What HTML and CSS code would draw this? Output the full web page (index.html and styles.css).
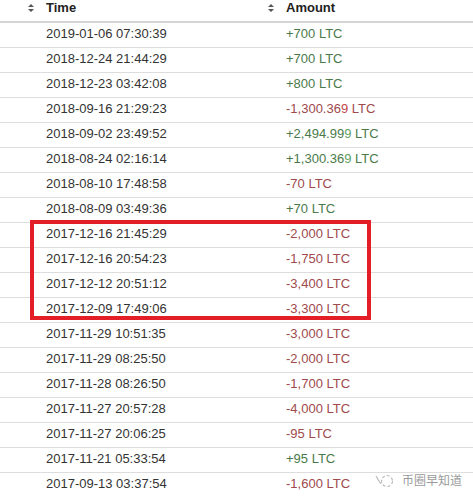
FILE: index.html
```html
<!DOCTYPE html>
<html lang="en">
  <head>
    <meta charset="UTF-8" />
    <title>LTC transactions</title>
    <link rel="stylesheet" href="styles.css">
  </head>
  <body>
    <div class="tableBlock">
      <div class="row head">
        <div class="cell">
          <svg class="sortIcon" width="6" height="8" viewBox="0 0 6 8"><path d="M3 0 L6 3 L0 3 Z M0 5 L6 5 L3 8 Z" fill="#555"/></svg>
          <span>Time</span>
        </div>
        <div class="cell">
          <svg class="sortIcon" width="6" height="8" viewBox="0 0 6 8"><path d="M3 0 L6 3 L0 3 Z M0 5 L6 5 L3 8 Z" fill="#555"/></svg>
          <span>Amount</span>
        </div>
      </div>
      <div id="rows"></div>

      <div class="highlight"></div>
      <div class="watermark">
        <svg width="22" height="18" viewBox="0 0 22 18">
          <path d="M2 5 Q4 9 7 13" stroke="#bbb" stroke-width="1.2" fill="none"/>
          <circle cx="13" cy="10" r="5.5" stroke="#bbb" stroke-width="1.2" fill="none" stroke-dasharray="3 2"/>
        </svg>
        <span>币圈早知道</span>
      </div>
    </div>

    <script>
      const data = [
        ["2019-01-06 07:30:39", "+700 LTC"],
        ["2018-12-24 21:44:29", "+700 LTC"],
        ["2018-12-23 03:42:08", "+800 LTC"],
        ["2018-09-16 21:29:23", "-1,300.36|9| LTC"],
        ["2018-09-02 23:49:52", "+2,494.99|9| LTC"],
        ["2018-08-24 02:16:14", "+1,300.36|9| LTC"],
        ["2018-08-10 17:48:58", "-70 LTC"],
        ["2018-08-09 03:49:36", "+70 LTC"],
        ["2017-12-16 21:45:29", "-2,000 LTC"],
        ["2017-12-16 20:54:23", "-1,750 LTC"],
        ["2017-12-12 20:51:12", "-3,400 LTC"],
        ["2017-12-09 17:49:06", "-3,300 LTC"],
        ["2017-11-29 10:51:35", "-3,000 LTC"],
        ["2017-11-29 08:25:50", "-2,000 LTC"],
        ["2017-11-28 08:26:50", "-1,700 LTC"],
        ["2017-11-27 20:57:28", "-4,000 LTC"],
        ["2017-11-27 20:06:25", "-95 LTC"],
        ["2017-11-21 05:33:54", "+95 LTC"],
        ["2017-09-13 03:37:54", "-1,600 LTC"],
      ];

      const rows = document.getElementById("rows");
      data.forEach((item) => {
        const kind = item[1][0] == "+" ? "plus" : "minus";
        const parts = item[1].split("|");
        let amount = parts[0];
        if (parts.length > 1) {
          amount += `<span class="tail">${parts[1]}</span>${parts[2]}`;
        }
        rows.innerHTML += `
          <div class="row">
            <div class="cell">${item[0]}</div>
            <div class="cell ${kind}">${amount}</div>
          </div>`;
      });
    </script>
  </body>
</html>
```

FILE: styles.css
```css
body {
  margin: 0;
  background-color: #fff;
  font-family: "Liberation Sans", Arial, sans-serif;
  font-size: 13px;
  color: #333;
}

.tableBlock {
  position: relative;
  width: 473px;
  overflow: hidden;
}

.row {
  display: grid;
  grid-template-columns: 240px 1fr;
  height: 22px;
  padding-bottom: 2px;
  line-height: 22px;
  border-bottom: 1px solid #ddd;
}
.cell {
  padding-left: 46px;
  white-space: nowrap;
}

.head {
  height: 21px;
  padding-bottom: 0;
  line-height: 15px;
  border-bottom: 2px solid #d4d4d4;
  font-weight: bold;
  color: #222;
}
.head .cell {
  display: flex;
  align-items: flex-start;
  gap: 12px;
  padding-left: 28px;
}
.sortIcon {
  margin-top: 4px;
}

.plus {
  color: #4a7a4a;
}
.plus .tail {
  color: #5fa05f;
}
.minus {
  color: #a04a4c;
}
.minus .tail {
  color: #c4474a;
}

.highlight {
  position: absolute;
  left: 30px;
  top: 220px;
  width: 333px;
  height: 92px;
  border: 4px solid #e31e27;
}

.watermark {
  position: absolute;
  left: 374px;
  top: 471px;
  display: flex;
  align-items: center;
  gap: 6px;
  font-family: "Noto Sans CJK SC", sans-serif;
  font-size: 12px;
  line-height: 18px;
  color: #9a9a9a;
}
```
